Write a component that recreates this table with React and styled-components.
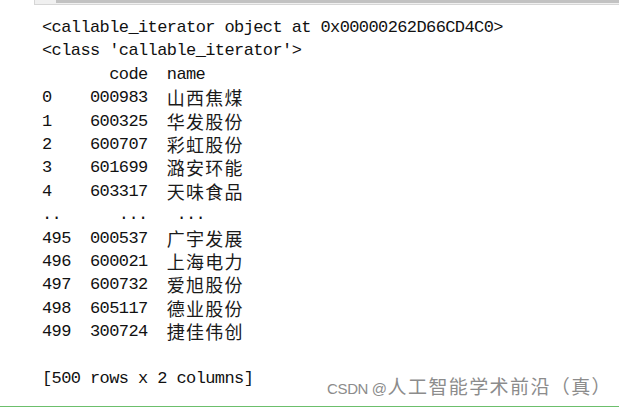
import React from 'react'
import styled, { createGlobalStyle } from 'styled-components';

const rows = [
    ['0', '000983', '山西焦煤'],
    ['1', '600325', '华发股份'],
    ['2', '600707', '彩虹股份'],
    ['3', '601699', '潞安环能'],
    ['4', '603317', '天味食品'],
    ['..', '...', '...', true],
    ['495', '000537', '广宇发展'],
    ['496', '600021', '上海电力'],
    ['497', '600732', '爱旭股份'],
    ['498', '605117', '德业股份'],
    ['499', '300724', '捷佳伟创'],
];

function App() {
    return (
        <Page>
            <GlobalStyle />
            <Scrollbar>
                <Thumb />
            </Scrollbar>
            <Output>
                <Line>{'<callable_iterator object at 0x00000262D66CD4C0>'}</Line>
                <Line>{"<class 'callable_iterator'>"}</Line>
                <Row>
                    <Cell />
                    <Code>code</Code>
                    <Header>name</Header>
                </Row>
                {rows.map(([idx, code, name, dots]) => (
                    <Row key={idx}>
                        <Cell>{idx}</Cell>
                        <Code>{code}</Code>
                        {dots ? <Dots>{name}</Dots> : <Name>{name}</Name>}
                    </Row>
                ))}
                <Line />
                <Line>[500 rows x 2 columns]</Line>
            </Output>
            <Watermark>
                <Latin>CSDN @</Latin>人工智能学术前沿（真）
            </Watermark>
            <Divider />
        </Page>
    )
}

export default App

const GlobalStyle = createGlobalStyle`
html, body {
    margin: 0;
    padding: 0;
    background: #fff;
}
`;

const Page = styled.div`
width: 619px;
height: 409px;
position: relative;
overflow: hidden;
background: #fff;
display: flex;
flex-direction: column;
`;

const Scrollbar = styled.div`
margin-left: 34px;
height: 4px;
background: #f0f0f0;
border-left: 1px solid #d6d6d6;
border-bottom: 1px solid #d6d6d6;
display: flex;
justify-content: flex-end;
`;

const Thumb = styled.div`
width: 563px;
height: 3px;
background: #c2c2c2;
`;

const Output = styled.div`
padding: 11px 0 0 42px;
font-family: "Liberation Mono", monospace;
font-size: 17px;
letter-spacing: -0.6px;
color: #111;
`;

const Line = styled.div`
height: 23.4px;
line-height: 23.4px;
white-space: pre;
`;

const Row = styled.div`
display: grid;
grid-template-columns: 48px 57.6px auto;
height: 23.4px;
line-height: 23.4px;
white-space: pre;
`;

const Cell = styled.div``;

const Code = styled.div`
text-align: right;
`;

const Header = styled.div`
padding-left: 19.2px;
`;

const Dots = styled.div`
padding-left: 28.8px;
`;

const Name = styled.div`
padding-left: 19.2px;
font-family: "Noto Sans CJK SC", sans-serif;
font-size: 18px;
line-height: 23.4px;
letter-spacing: 1.2px;
color: #1a1a1a;
`;

const Watermark = styled.div`
position: absolute;
right: 7px;
bottom: 10px;
line-height: 20px;
font-family: "Noto Sans CJK SC", sans-serif;
font-size: 19px;
letter-spacing: 1.4px;
color: #8c8c8c;
`;

const Latin = styled.span`
font-family: "Liberation Sans", sans-serif;
font-size: 15px;
letter-spacing: -0.4px;
margin-right: 1px;
`;

const Divider = styled.div`
position: absolute;
left: 0;
right: 0;
bottom: 2px;
height: 1px;
background: #6cbf6c;
`;
